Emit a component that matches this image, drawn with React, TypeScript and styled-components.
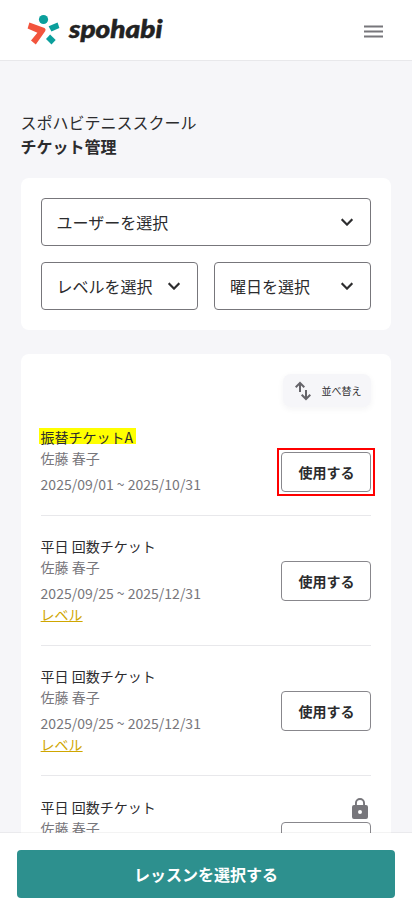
import React from "react";
import styled, { createGlobalStyle } from "styled-components";

const GlobalStyle = createGlobalStyle`
  * { box-sizing: border-box; }
  html, body { margin: 0; padding: 0; }
  body {
    background: #f6f6f9;
    color: #2c2c2e;
    font-family: "Noto Sans CJK JP", sans-serif;
    overflow: hidden;
  }
  button { font-family: inherit; color: inherit; margin: 0; }
`;

const Screen = styled.div`
  height: 915px;
  display: flex;
  flex-direction: column;
  overflow: hidden;
`;

const Header = styled.header`
  flex: none;
  height: 61px;
  padding: 0 27px;
  display: flex;
  align-items: center;
  justify-content: space-between;
  background: #fff;
  border-bottom: 1px solid #e8e8eb;
`;

const Logo = styled.svg`
  display: block;
  width: 140px;
  height: 60px;
`;

const Wordmark = styled.text`
  font-family: Lato, sans-serif;
  font-size: 25px;
  font-weight: 900;
  font-style: italic;
  fill: #222;
  stroke: #222;
  stroke-width: 0.5px;
`;

const MenuButton = styled.button`
  width: 24px;
  height: 24px;
  padding: 0;
  border: 0;
  background: none;
  color: #77767b;
  svg { display: block; }
`;

const Main = styled.main`
  flex: 1;
  min-height: 0;
  overflow: hidden;
  padding: 49px 20.6px 0;
`;

const Heading = styled.h1<{ $strong?: boolean }>`
  margin: 0;
  font-size: 16px;
  line-height: 24px;
  font-weight: ${(p) => (p.$strong ? 700 : 400)};
`;

const Card = styled.section`
  background: #fff;
  border-radius: 8px;
  padding: 20px;
`;

const Filters = styled(Card)`
  display: grid;
  grid-template-columns: 1fr 1fr;
  gap: 16px;
  margin: 20px 0 24px;
`;

const Select = styled.button<{ $wide?: boolean }>`
  grid-column: ${(p) => (p.$wide ? "1 / -1" : "auto")};
  height: 48px;
  padding: 0 11px 0 15px;
  display: flex;
  align-items: center;
  justify-content: space-between;
  border: 1px solid #77767b;
  border-radius: 4px;
  background: #fff;
  font-size: 16px;
  line-height: 24px;
  white-space: nowrap;
  svg { flex: none; }
`;

const SortButton = styled.button`
  margin-left: auto;
  width: 88px;
  height: 33px;
  padding: 0 10px 0 8px;
  display: flex;
  align-items: center;
  justify-content: space-between;
  border: 0;
  border-radius: 8px;
  background: #f6f6f9;
  box-shadow: 0 2px 6px rgba(30, 30, 60, 0.05);
  font-size: 10px;
  white-space: nowrap;
`;

const Ticket = styled.article`
  display: flex;
  justify-content: space-between;
  align-items: flex-start;
  padding: 20px 0;
  border-bottom: 1px solid #e8e8eb;
`;

const Details = styled.div`
  font-size: 14px;
  line-height: 21px;
`;

const TicketName = styled.div<{ $lower?: boolean }>`
  padding-top: ${(p) => (p.$lower ? "1px" : "0")};
`;

const Marked = styled.mark`
  display: block;
  width: 97px;
  height: 16px;
  margin: 1px 0 4px -1.4px;
  padding-left: 1.4px;
  line-height: 19px;
  background: #ff0;
  color: inherit;
`;

const Meta = styled.div<{ $gap?: boolean }>`
  margin-top: ${(p) => (p.$gap ? "5px" : "0")};
  color: #77767b;
`;

const LevelLink = styled.a`
  display: block;
  width: max-content;
  color: #cfa600;
  text-decoration: underline;
`;

const Action = styled.div`
  display: flex;
  flex-direction: column;
  align-items: flex-end;
  height: 65px;
`;

const IconSlot = styled.div<{ $lower?: boolean }>`
  flex: none;
  height: ${(p) => (p.$lower ? "26px" : "25px")};
  padding-top: ${(p) => (p.$lower ? "1px" : "0")};
  margin-right: -1px;
  svg { display: block; }
`;

const UseButton = styled.button`
  flex: none;
  width: 90px;
  height: 40px;
  padding: 0;
  border: 1px solid #88878c;
  border-radius: 4px;
  background: #fff;
  font-size: 14px;
  font-weight: 700;
`;

const Ring = styled.div<{ $on?: boolean }>`
  flex: none;
  height: 40px;
  box-shadow: ${(p) => (p.$on ? "0 0 0 2px #fff, 0 0 0 4px #f00" : "none")};
`;

const Footer = styled.footer`
  flex: none;
  height: 82px;
  padding: 17px;
  background: #fff;
  box-shadow: 0 -1px 0 rgba(44, 44, 46, 0.06);
`;

const Primary = styled.button`
  display: block;
  width: 100%;
  height: 48px;
  border: 0;
  border-radius: 4px;
  background: #2d908e;
  color: #fff;
  font-size: 16px;
  font-weight: 700;
`;

const Chevron = () => (
  <svg width="24" height="24" viewBox="0 0 24 24" fill="#2c2c2e" stroke="#2c2c2e" strokeWidth="0.2">
    <path d="M7.41 8.59 12 13.17l4.59-4.58L18 10l-6 6-6-6z" />
  </svg>
);

const SortIcon = () => (
  <svg width="24" height="24" viewBox="0 0 24 24" fill="none" stroke="#66656a" strokeWidth="2">
    <path d="M9 13V4M4.7 8.2 9 4l4.3 4.2M15 11v9M10.7 15.8 15 20l4.3-4.2" />
  </svg>
);

const LockIcon = () => (
  <svg width="24" height="24" viewBox="0 0 24 24" fill="#77767b">
    <path d="M18 8h-1V6A5 5 0 0 0 7 6v2H6a2 2 0 0 0-2 2v10a2 2 0 0 0 2 2h12a2 2 0 0 0 2-2V10a2 2 0 0 0-2-2zm-6 9a2 2 0 1 1 0-4 2 2 0 0 1 0 4zm3.1-9H8.9V6a3.1 3.1 0 0 1 6.2 0z" />
  </svg>
);

type TicketData = {
  name: string;
  period: string;
  marked?: boolean;
  level?: boolean;
  locked?: boolean;
};

const tickets: TicketData[] = [
  { name: "振替チケットA", period: "2025/09/01 ~ 2025/10/31", marked: true },
  { name: "平日 回数チケット", period: "2025/09/25 ~ 2025/12/31", level: true },
  { name: "平日 回数チケット", period: "2025/09/25 ~ 2025/12/31", level: true },
  { name: "平日 回数チケット", period: "2025/09/25 ~ 2025/12/31", level: true, locked: true },
];

export default function App() {
  return (
    <Screen>
      <GlobalStyle />
      <Header>
        <Logo viewBox="27 0 140 60" role="img" aria-label="spohabi">
          <circle cx="43.5" cy="19.5" r="4.6" fill="#0b9f9c" />
          <path d="M29.4 22.6 44.5 28Q46.2 29 45.3 31L35.8 44.6 31 40.6 37.4 32.8 27.6 28.4z" fill="#f2543d" />
          <path d="M48.6 26.2 57.6 22.6 59.4 28.1 51.4 31.4z" fill="#0b9f9c" />
          <path d="M50.1 34.5 55.7 40 51.5 44.6 46 39z" fill="#0b9f9c" />
          <Wordmark x="69" y="37.7" textLength="93.5" lengthAdjust="spacingAndGlyphs">spohabi</Wordmark>
        </Logo>
        <MenuButton aria-label="メニュー">
          <svg width="24" height="24" viewBox="0 0 24 24" fill="none" stroke="currentColor" strokeWidth="2">
            <path d="M3 8.4h19M3 13.4h19M3 18.4h19" />
          </svg>
        </MenuButton>
      </Header>
      <Main>
        <Heading>スポハビテニススクール</Heading>
        <Heading $strong>チケット管理</Heading>
        <Filters>
          <Select $wide>ユーザーを選択<Chevron /></Select>
          <Select>レベルを選択<Chevron /></Select>
          <Select>曜日を選択<Chevron /></Select>
        </Filters>
        <Card>
          <SortButton><SortIcon />並べ替え</SortButton>
          {tickets.map((t, i) => (
            <Ticket key={i}>
              <Details>
                {t.marked ? <Marked>{t.name}</Marked> : <TicketName $lower={t.locked}>{t.name}</TicketName>}
                <Meta>佐藤 春子</Meta>
                <Meta $gap>{t.period}</Meta>
                {t.level && <LevelLink>レベル</LevelLink>}
              </Details>
              <Action>
                <IconSlot $lower={t.locked}>{t.locked && <LockIcon />}</IconSlot>
                <Ring $on={t.marked}><UseButton>使用する</UseButton></Ring>
              </Action>
            </Ticket>
          ))}
        </Card>
      </Main>
      <Footer>
        <Primary>レッスンを選択する</Primary>
      </Footer>
    </Screen>
  );
}
